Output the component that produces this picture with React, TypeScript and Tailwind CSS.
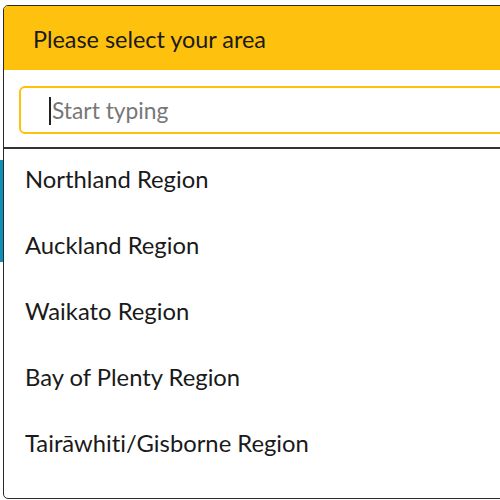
import React from "react";

const regions = [
  "Northland Region",
  "Auckland Region",
  "Waikato Region",
  "Bay of Plenty Region",
  "Tairāwhiti/Gisborne Region",
];

export default function App() {
  return (
    <div
      className="w-[500px] h-[500px] overflow-hidden bg-white flex [font-variant-ligatures:none]"
      style={{ fontFamily: "Lato, 'Open Sans', sans-serif" }}
    >
      <div className="w-[3px] shrink-0">
        <div className="mt-[160px] h-[102px] w-[3px] bg-[#0e8fb5]" />
      </div>
      <div className="mt-[5px] w-[540px] h-[494px] shrink-0 border border-[#2a2a2a] rounded-l-[5px] overflow-hidden flex flex-col">
        <div className="h-[64px] bg-[#fec10e] flex items-center pl-[29px] pt-[3px] text-[23.4px] text-[#1a1a1a]">
          Please select your area
        </div>
        <div className="pt-[16px] pb-[13px] pl-[15px]">
          <div className="h-[48px] border-2 border-[#fec10e] rounded-[6px] flex items-center pl-[28px] pt-[1px]">
            <div className="w-[2px] h-[28px] bg-[#222] mr-[1px]" />
            <span className="text-[22.8px] text-[#777]">Start typing</span>
          </div>
        </div>
        <div className="h-[2px] bg-[#333]" />
        <div className="flex flex-col">
          {regions.map((r) => (
            <div
              key={r}
              className="h-[66px] flex items-center pl-[21px] pb-[5px] text-[23.8px] text-[#1a1a1a]"
            >
              {r}
            </div>
          ))}
        </div>
      </div>
    </div>
  );
}
